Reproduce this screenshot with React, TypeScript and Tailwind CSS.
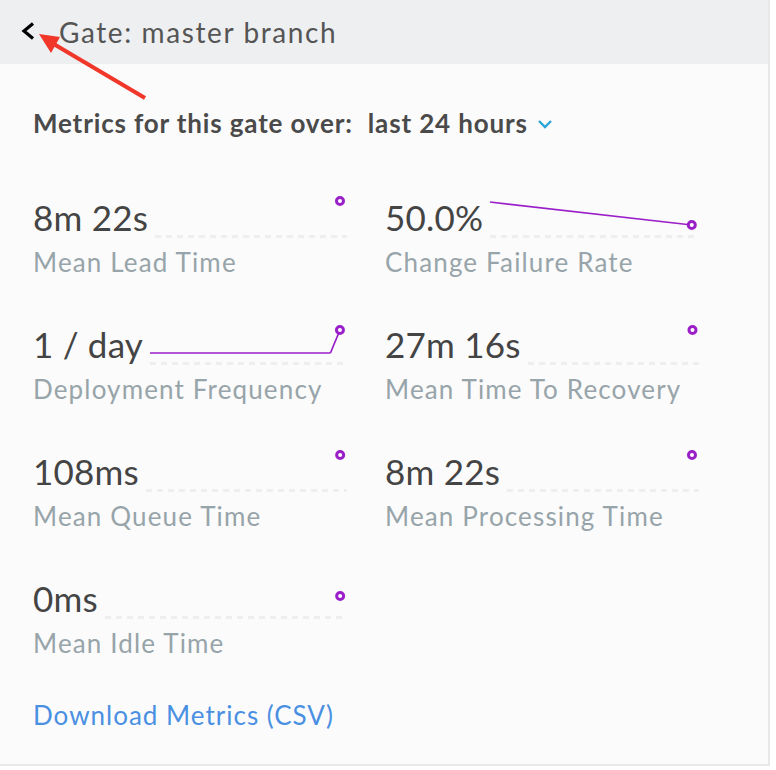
import React from 'react';

type Spark = {
  dotY: number;
  line?: { x1: string; y1: number; x2: string; y2: number }[];
};

type Metric = { value: string; label: string; spark: Spark };

const metrics: Metric[] = [
  { value: '8m 22s', label: 'Mean Lead Time', spark: { dotY: 6 } },
  {
    value: '50.0%',
    label: 'Change Failure Rate',
    spark: { dotY: 30, line: [{ x1: '0%', y1: 7, x2: '100%', y2: 30 }] },
  },
  {
    value: '1 / day',
    label: 'Deployment Frequency',
    spark: {
      dotY: 8,
      line: [
        { x1: '0%', y1: 31, x2: '95%', y2: 31 },
        { x1: '95%', y1: 31, x2: '100%', y2: 8 },
      ],
    },
  },
  { value: '27m 16s', label: 'Mean Time To Recovery', spark: { dotY: 8 } },
  { value: '108ms', label: 'Mean Queue Time', spark: { dotY: 6 } },
  { value: '8m 22s', label: 'Mean Processing Time', spark: { dotY: 6 } },
  { value: '0ms', label: 'Mean Idle Time', spark: { dotY: 20 } },
];

const Sparkline = ({ spark }: { spark: Spark }) => (
  <div className="flex-1 flex flex-col ml-[7px]">
    <div className="pr-[7px] h-[40px]">
      <svg width="100%" height="40" overflow="visible" className="block">
        {spark.line?.map((l, i) => (
          <line key={i} x1={l.x1} y1={l.y1} x2={l.x2} y2={l.y2} stroke="#9b1fc9" strokeWidth="1.7" />
        ))}
        <circle cx="100%" cy={spark.dotY} r="3.5" fill="#fff" stroke="#9b1fc9" strokeWidth="3" />
      </svg>
    </div>
    <svg width="100%" height="4" className="block">
      <line x1="0" y1="1.5" x2="100%" y2="1.5" stroke="#eeeeee" strokeWidth="3" strokeDasharray="6 5" />
    </svg>
  </div>
);

export default function App() {
  return (
    <div className="w-[776px] h-[770px] bg-white relative" style={{ fontFamily: 'Lato, "Noto Sans", sans-serif' }}>
      <div className="w-[770px] h-[766px] bg-[#fbfbfb] border-r-2 border-b-2 border-[#e8e8e8] flex flex-col">
        <div className="h-[64px] bg-[#eeeff1] flex items-center pl-[20px]">
          <svg width="16" height="20" viewBox="0 0 16 20" className="mt-[-2px]">
            <path d="M13 2.5 L4 10 L13 17.5" fill="none" stroke="#000" strokeWidth="3.2" />
          </svg>
          <span className="ml-[23px] text-[28px] tracking-[1.6px] text-[#555555] leading-none mt-[-1px]">
            Gate: master branch
          </span>
        </div>

        <div className="pl-[33px] pt-[43px]">
          <div className="flex items-center text-[26px] leading-[32px] font-bold text-[#4a4a4a] tracking-[0.85px]">
            <span>Metrics for this gate over:</span>
            <span className="ml-[15px]">last 24 hours</span>
            <svg width="16" height="10" viewBox="0 0 16 10" className="ml-[9px] mt-[2px]">
              <path d="M2 2 L8 8 L14 2" fill="none" stroke="#2aa6d6" strokeWidth="2.4" />
            </svg>
          </div>

          <div className="grid grid-cols-[314px_314px] gap-x-[38px] gap-y-[44px] mt-[56px]">
            {metrics.map((m, i) => (
              <div key={i}>
                <div className="flex items-end h-[44px]">
                  <span className="text-[35px] leading-[44px] tracking-[0.2px] text-[#444444]">{m.value}</span>
                  <Sparkline spark={m.spark} />
                </div>
                <div className="mt-[7px] text-[26px] leading-[32px] tracking-[1.15px] text-[#97a4a9]">{m.label}</div>
              </div>
            ))}
          </div>

          <a href="#" className="block mt-[40px] text-[26px] leading-[32px] tracking-[1px] text-[#4a90e2]">
            Download Metrics (CSV)
          </a>
        </div>
      </div>

      <svg className="absolute left-0 top-0 pointer-events-none" width="160" height="110">
        <line x1="145" y1="98" x2="52" y2="43" stroke="#f0372a" strokeWidth="4" />
        <polygon points="39,34 60,37 51,53" fill="#f0372a" />
      </svg>
    </div>
  );
}
